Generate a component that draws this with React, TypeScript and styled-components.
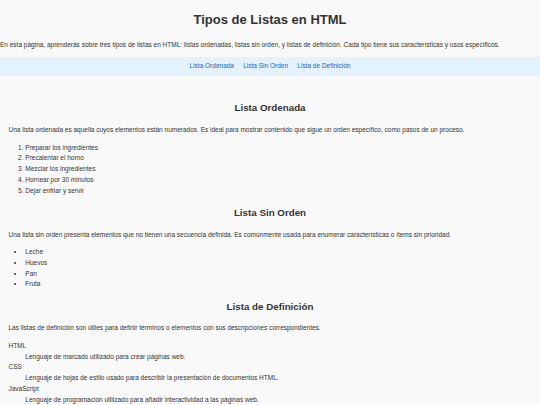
import React from "react";
import styled, { createGlobalStyle } from "styled-components";

// the reference is a 1280px page shown at 540px, so every size goes through u()
const SCALE = 540 / 1280;
const u = (n: number) => `${(n * SCALE).toFixed(2)}px`;
// glyphs come out a little wider here than in the reference, so fonts get trimmed
const f = (n: number) => `${(n * SCALE * 0.965).toFixed(2)}px`;

const GlobalStyle = createGlobalStyle`
    html, body {
        margin: 0;
        padding: 0;
        background: #f9f9f9;
    }
    body {
        font-family: "Liberation Sans", Arial, sans-serif;
        font-size: ${f(16)};
        line-height: ${u(25.6)};
        color: #333;
    }
`;

const Header = styled.header`
    text-align: left;
`;

const Title = styled.h1`
    font-size: ${f(32)};
    line-height: ${u(51.2)};
    font-weight: bold;
    text-align: center;
    margin: ${u(21.4)} 0;
    color: #333;
`;

const Intro = styled.p`
    margin: ${u(16)} 0;
`;

const Nav = styled.nav`
    background: #e3f2fd;
    padding: ${u(10)} 0;
    display: flex;
    justify-content: center;
    gap: ${u(22)};
`;

const NavLink = styled.a`
    color: #1e68b8;
    text-decoration: none;
`;

const Main = styled.main`
    padding: ${u(37)} ${u(20)} ${u(20)};
`;

const Section = styled.section`
    margin: 0;
`;

const Heading = styled.h2`
    font-size: ${f(24)};
    line-height: ${u(38.4)};
    font-weight: bold;
    text-align: center;
    margin: ${u(19.9)} 0;
    color: #333;
`;

const Text = styled.p`
    margin: ${u(16)} 0;
`;

const Ordered = styled.ol`
    margin: ${u(16)} 0;
    padding-left: ${u(40)};
`;

const Unordered = styled.ul`
    margin: ${u(16)} 0;
    padding-left: ${u(40)};
`;

const Definitions = styled.dl`
    margin: ${u(16)} 0;
`;

const Term = styled.dt`
    margin: 0;
`;

const Description = styled.dd`
    margin: 0 0 0 ${u(40)};
`;

const steps = [
    "Preparar los ingredientes",
    "Precalentar el horno",
    "Mezclar los ingredientes",
    "Hornear por 30 minutos",
    "Dejar enfriar y servir",
];

const groceries = ["Leche", "Huevos", "Pan", "Fruta"];

const terms = [
    { term: "HTML", text: "Lenguaje de marcado utilizado para crear páginas web." },
    { term: "CSS", text: "Lenguaje de hojas de estilo usado para describir la presentación de documentos HTML." },
    { term: "JavaScript", text: "Lenguaje de programación utilizado para añadir interactividad a las páginas web." },
];

const App: React.FC = () => {
    return (
        <>
            <GlobalStyle />
            <Header>
                <Title>Tipos de Listas en HTML</Title>
                <Intro>
                    En esta página, aprenderás sobre tres tipos de listas en HTML: listas ordenadas, listas sin orden, y listas de definición. Cada tipo tiene sus características y usos específicos.
                </Intro>
            </Header>
            <Nav>
                <NavLink href="#ordenada">Lista Ordenada</NavLink>
                <NavLink href="#sin-orden">Lista Sin Orden</NavLink>
                <NavLink href="#definicion">Lista de Definición</NavLink>
            </Nav>
            <Main>
                <Section id="ordenada">
                    <Heading>Lista Ordenada</Heading>
                    <Text>Una lista ordenada es aquella cuyos elementos están numerados. Es ideal para mostrar contenido que sigue un orden específico, como pasos de un proceso.</Text>
                    <Ordered>
                        {steps.map((s) => <li key={s}>{s}</li>)}
                    </Ordered>
                </Section>
                <Section id="sin-orden">
                    <Heading>Lista Sin Orden</Heading>
                    <Text>Una lista sin orden presenta elementos que no tienen una secuencia definida. Es comúnmente usada para enumerar características o ítems sin prioridad.</Text>
                    <Unordered>
                        {groceries.map((g) => <li key={g}>{g}</li>)}
                    </Unordered>
                </Section>
                <Section id="definicion">
                    <Heading>Lista de Definición</Heading>
                    <Text>Las listas de definición son útiles para definir términos o elementos con sus descripciones correspondientes.</Text>
                    <Definitions>
                        {terms.map((t) => (
                            <React.Fragment key={t.term}>
                                <Term>{t.term}</Term>
                                <Description>{t.text}</Description>
                            </React.Fragment>
                        ))}
                    </Definitions>
                </Section>
            </Main>
        </>
    );
};

export default App;
